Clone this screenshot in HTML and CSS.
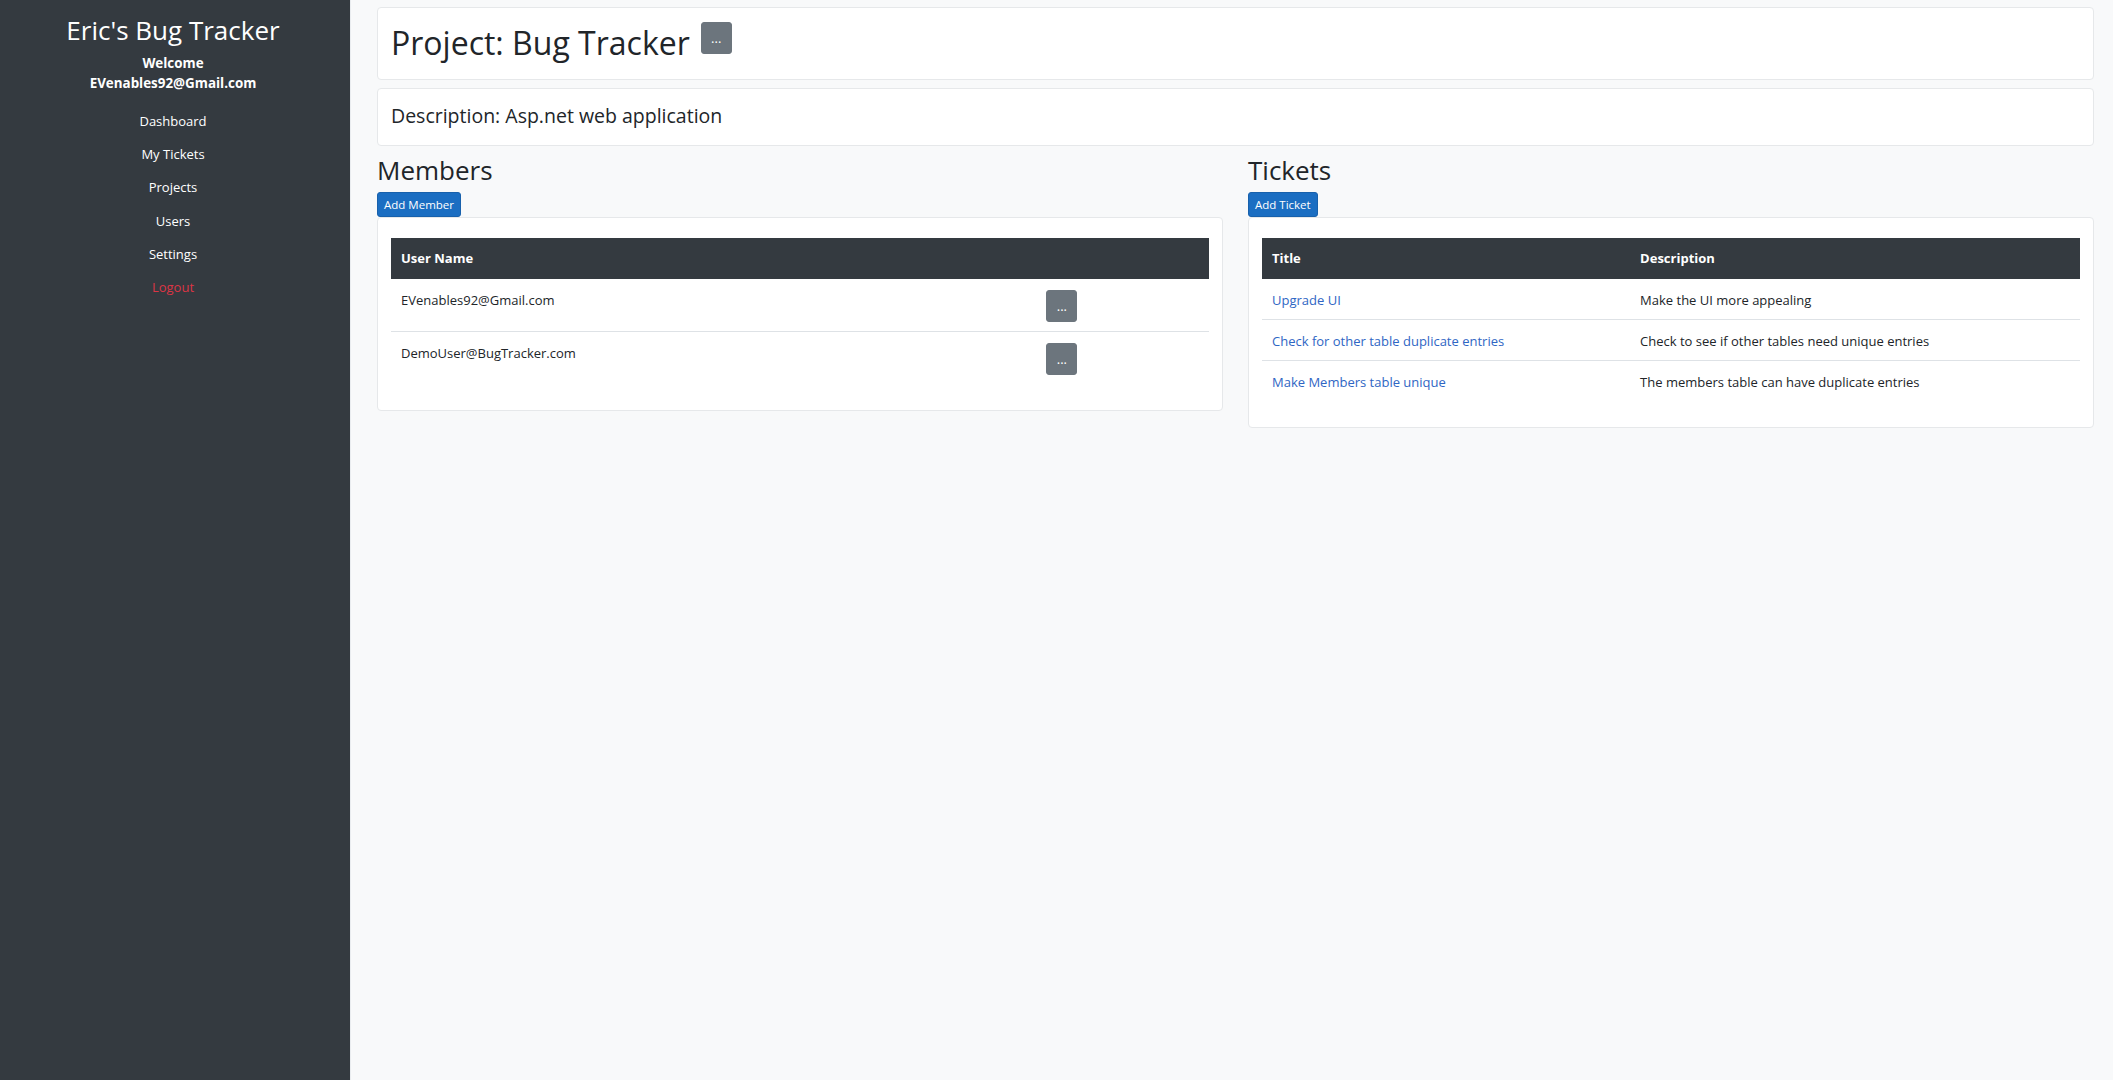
FILE: index.html
```html
<!DOCTYPE html>
<html lang="en">
<head>
<meta charset="utf-8">
<title>Project: Bug Tracker</title>
<link rel="stylesheet" href="styles.css">
</head>
<body>
<div class="app">
  <aside class="sidebar">
    <h2 class="brand">Eric's Bug Tracker</h2>
    <div class="welcome">
      <div>Welcome</div>
      <div>EVenables92@Gmail.com</div>
    </div>
    <nav class="nav">
      <a class="nav-link" href="#">Dashboard</a>
      <a class="nav-link" href="#">My Tickets</a>
      <a class="nav-link" href="#">Projects</a>
      <a class="nav-link" href="#">Users</a>
      <a class="nav-link" href="#">Settings</a>
      <a class="nav-link logout" href="#">Logout</a>
    </nav>
  </aside>
  <main class="main">
    <div class="card title-card">
      <h1 class="project-title">Project: Bug Tracker</h1>
      <button class="btn btn-secondary">...</button>
    </div>
    <div class="card desc-card">
      <h4 class="desc">Description: Asp.net web application</h4>
    </div>
    <div class="columns">
      <section class="col">
        <h2 class="section-title">Members</h2>
        <button class="btn btn-primary btn-sm">Add Member</button>
        <div class="card table-card">
          <table class="table members">
            <thead>
              <tr><th class="c-user">User Name</th><th></th></tr>
            </thead>
            <tbody>
              <tr><td>EVenables92@Gmail.com</td><td><button class="btn btn-secondary">...</button></td></tr>
              <tr><td>DemoUser@BugTracker.com</td><td><button class="btn btn-secondary">...</button></td></tr>
            </tbody>
          </table>
        </div>
      </section>
      <section class="col">
        <h2 class="section-title">Tickets</h2>
        <button class="btn btn-primary btn-sm">Add Ticket</button>
        <div class="card table-card">
          <table class="table tickets">
            <thead>
              <tr><th class="c-title">Title</th><th>Description</th></tr>
            </thead>
            <tbody>
              <tr><td><a href="#">Upgrade UI</a></td><td>Make the UI more appealing</td></tr>
              <tr><td><a href="#">Check for other table duplicate entries</a></td><td>Check to see if other tables need unique entries</td></tr>
              <tr><td><a href="#">Make Members table unique</a></td><td>The members table can have duplicate entries</td></tr>
            </tbody>
          </table>
        </div>
      </section>
    </div>
  </main>
</div>
</body>
</html>
```
FILE: styles.css
```css
* { box-sizing: border-box; }
html, body { margin: 0; height: 100%; overflow: hidden; }
body {
  font-family: "Open Sans", "Noto Sans", sans-serif;
  font-size: 13px;
  line-height: 20px;
  color: #212529;
  background: #f8f9fa;
}
h1, h2, h4 { margin: 0; font-weight: 500; }
.app { display: flex; height: 100vh; }
.sidebar {
  width: 351px;
  flex: none;
  background: #343a40;
  border-right: 1px solid #e9ecef;
  color: #fff;
  text-align: center;
  padding: 13px 4px 0 0;
}
.brand { font-size: 26px; line-height: 34px; font-weight: 500; }
.welcome { margin-top: 6px; font-weight: 700; font-size: 13.4px; line-height: 20px; }
.nav { margin-top: 12px; display: flex; flex-direction: column; align-items: center; }
.nav-link { color: #fff; text-decoration: none; padding: 6px 14px; line-height: 21.2px; font-size: 13px; }
.nav-link.logout { color: #dc3545; }
.main { flex: 1; padding: 7px 19px 0 26px; }
.card {
  background: #fff;
  border: 1px solid #e6e8ea;
  border-radius: 4px;
}
.title-card { display: flex; align-items: flex-start; gap: 11px; padding: 13px 13px 14px; }
.project-title { font-size: 32px; line-height: 44px; font-weight: 500; }
.title-card .btn { margin-top: 1px; }
.desc-card { margin-top: 8px; padding: 14px 13px 17px; }
.desc { font-size: 19.5px; line-height: 25px; font-weight: 500; }
.columns { display: grid; grid-template-columns: 1fr 1fr; column-gap: 25px; margin-top: 7px; }
.col { display: flex; flex-direction: column; align-items: flex-start; }
.section-title { font-size: 26px; line-height: 34px; margin-bottom: 5px; }
.btn {
  font-family: inherit;
  border: 1px solid transparent;
  border-radius: 3px;
  color: #fff;
  cursor: pointer;
}
.btn-secondary { background: #6c757d; border-color: #6c757d; font-size: 13px; line-height: 20px; padding: 5px 9px; width: 31px; height: 32px; }
.btn-primary { background: #1b6ec2; border-color: #1861ac; }
.btn-sm { font-size: 11.5px; line-height: 17px; padding: 3px 6px; height: 25px; }
.table-card { align-self: stretch; padding: 20px 13px 26px; }
.table { width: 100%; border-collapse: collapse; }
.table th {
  background: #343a40;
  color: #fff;
  text-align: left;
  font-weight: 700;
  padding: 10px 10px;
  line-height: 21px;
}
.table td { padding: 11px 10px 9px; line-height: 20px; vertical-align: top; border-top: 1px solid #dee2e6; }
.table tbody tr:first-child td { border-top: 0; }
.members .c-user { width: 78.9%; }
.tickets .c-title { width: 45%; }
.tickets a { color: #2f66c4; text-decoration: none; }
```
